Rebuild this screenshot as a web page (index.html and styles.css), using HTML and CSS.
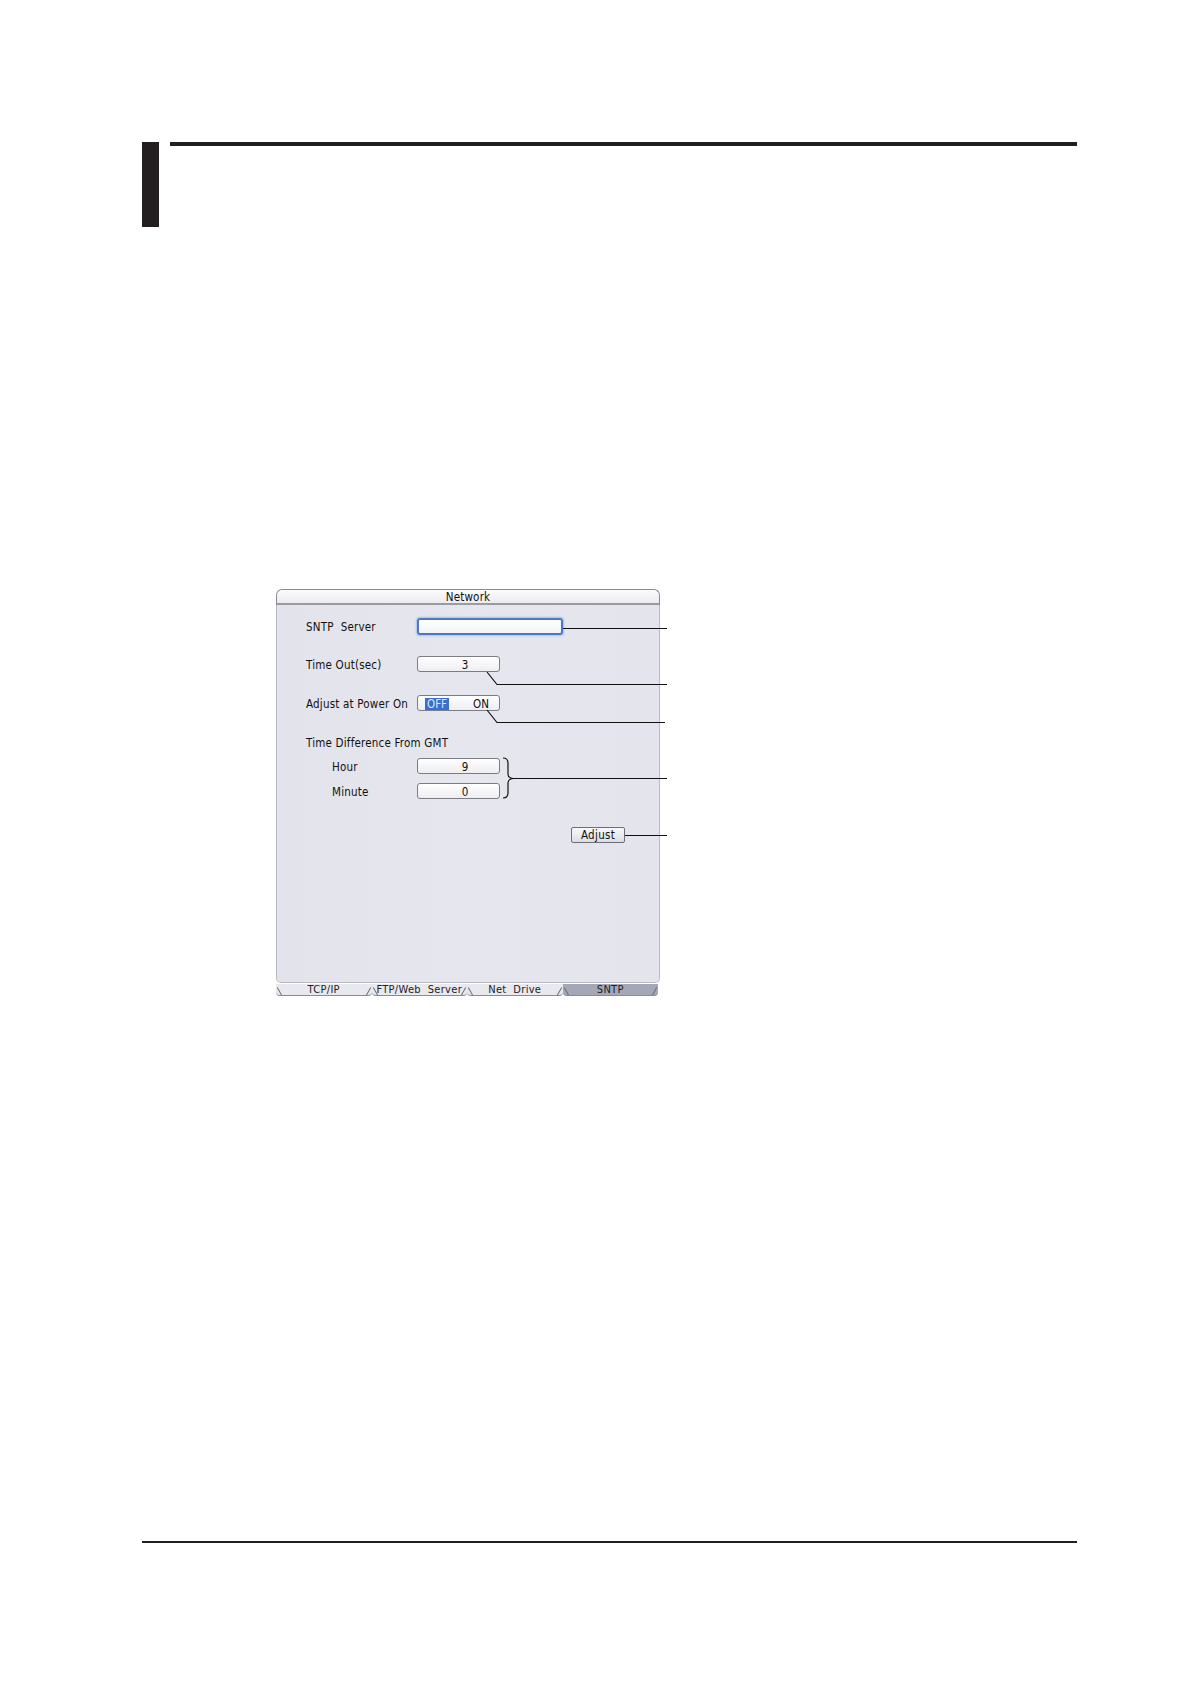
FILE: index.html
```html
<!DOCTYPE html>
<html lang="en">
<head>
<meta charset="utf-8">
<title>Network - SNTP</title>
<link rel="stylesheet" href="styles.css">
</head>
<body>
<div class="page">
  <header class="head">
    <div class="head-bar"></div>
    <div class="head-rule"></div>
  </header>

  <div class="figure">
    <div class="dialog">
      <div class="title">Network</div>
      <div class="body">
        <div class="row r1">
          <span class="lbl">SNTP  Server</span>
          <span class="field wide focus"></span>
        </div>
        <div class="row r2">
          <span class="lbl">Time Out(sec)</span>
          <span class="field num">3</span>
        </div>
        <div class="row r3">
          <span class="lbl">Adjust at Power On</span>
          <span class="field toggle"><span class="opt sel">OFF</span><span class="opt">ON</span></span>
        </div>
        <div class="row r4">
          <span class="lbl">Time Difference From GMT</span>
        </div>
        <div class="row r5">
          <span class="lbl sub">Hour</span>
          <span class="field num">9</span>
        </div>
        <div class="row r6">
          <span class="lbl sub">Minute</span>
          <span class="field num">0</span>
        </div>
        <div class="row r7">
          <span class="btn">Adjust</span>
        </div>
      </div>
      <div class="tabs">
        <div class="tab">TCP/IP</div>
        <div class="tab">FTP/Web  Server</div>
        <div class="tab">Net  Drive</div>
        <div class="tab active">SNTP</div>
      </div>
    </div>
    <svg class="leaders" width="400" height="407" viewBox="0 0 400 407">
      <g fill="none" stroke="#111" stroke-width="1.2">
        <path d="M287 39.5 H391"/>
        <path d="M211 83 L221 95.5 H391"/>
        <path d="M211 121 L221 133.5 H389"/>
        <path d="M227 169 Q232 169 232 174 V185 Q232 189 237 189.5 Q232 190 232 194 V204 Q232 209 227 209"/>
        <path d="M237 189.5 H391"/>
        <path d="M349 246.5 H391"/>
      </g>
    </svg>
  </div>

  <footer class="foot-rule"></footer>
</div>
</body>
</html>
```

FILE: styles.css
```css
html, body {
  margin: 0;
  padding: 0;
  background: #ffffff;
}

.page {
  width: 1191px;
  height: 1684px;
  box-sizing: border-box;
  padding: 142px 0 0 142px;
  overflow: hidden;
  font-family: "DejaVu Sans Condensed", "DejaVu Sans", sans-serif;
  font-stretch: condensed;
}

/* ---------- header ---------- */
.head {
  display: flex;
  align-items: flex-start;
  gap: 11px;
}

.head-bar {
  width: 17px;
  height: 85px;
  background: #231f20;
}

.head-rule {
  width: 907px;
  height: 4px;
  background: #231f20;
}

/* ---------- figure ---------- */
.figure {
  position: relative;
  margin: 362px 0 0 134px;
  width: 384px;
  height: 407px;
}

.dialog {
  width: 384px;
  height: 407px;
  box-sizing: border-box;
  display: flex;
  flex-direction: column;
  font-size: 11.5px;
  color: #111;
}

.title {
  height: 16px;
  box-sizing: border-box;
  border: 1px solid #8a8a90;
  border-bottom: 2px solid #9a9aa2;
  border-radius: 6px 6px 0 0;
  background: linear-gradient(#fbfbfc, #ececf0);
  text-align: center;
  line-height: 14px;
  letter-spacing: 0.2px;
}

.body {
  flex: 1;
  box-sizing: border-box;
  border: 1px solid #b9b9c2;
  border-top: none;
  border-radius: 0 0 5px 5px;
  background: linear-gradient(90deg, #e2e3eb 0%, #e6e7ee 50%, #e3e4ec 100%);
  padding: 13px 0 0 29px;
}

.row {
  display: flex;
  align-items: center;
  height: 16px;
}

.r1 { height: 17px; }
.r2 { margin-top: 21px; }
.r3 { margin-top: 23px; }
.r4 { margin-top: 23px; }
.r5 { margin-top: 8px; }
.r6 { margin-top: 9px; }
.r7 {
  margin-top: 28px;
  justify-content: flex-end;
  padding-right: 34px;
}

.lbl {
  width: 111px;
  white-space: pre;
  letter-spacing: 0.2px;
  padding-top: 1px;
}

.r4 .lbl { width: auto; }

.lbl.sub {
  width: 85px;
  padding-left: 26px;
}

.field {
  width: 83px;
  height: 16px;
  box-sizing: border-box;
  border: 1px solid #7c7c84;
  border-radius: 3px;
  background: linear-gradient(#ffffff, #eeeef2);
  display: flex;
  align-items: center;
  justify-content: center;
  line-height: 14px;
}

.field.num {
  padding-left: 13px;
  padding-top: 1px;
}

.field.wide {
  width: 146px;
  height: 17px;
}

.field.focus {
  border: 2px solid #4f78c4;
  box-shadow: 0 0 2px 1px #a8c0e8;
  background: linear-gradient(#ffffff, #f2f3f7);
}

.field.toggle {
  justify-content: space-between;
  padding: 1px 10px 0 7px;
}

.opt {
  line-height: 12px;
}

.opt.sel {
  background: #3a6fd0;
  color: #dfe8ff;
  padding: 0 2px;
}

.btn {
  width: 54px;
  height: 16px;
  box-sizing: border-box;
  border: 1px solid #6e6e76;
  border-radius: 2px;
  background: linear-gradient(#f8f8fa, #dcdde4);
  text-align: center;
  line-height: 15px;
  letter-spacing: 0.3px;
}

/* ---------- tabs ---------- */
.tabs {
  display: flex;
  height: 12px;
  margin-top: 1px;
  padding-right: 2px;
}

.tab {
  position: relative;
  flex: 1;
  box-sizing: border-box;
  height: 12px;
  overflow: hidden;
  white-space: pre;
  text-align: center;
  line-height: 12px;
  font-size: 11px;
  letter-spacing: 0.3px;
  border-bottom: 1px solid #8a8a90;
  border-radius: 0 0 4px 4px;
  background: #e8e8ee;
  color: #222;
}

.tab::before,
.tab::after {
  content: "";
  position: absolute;
  bottom: -1px;
  width: 1px;
  height: 9px;
  background: #6e6e76;
}

.tab::before {
  left: 3px;
  transform: rotate(-30deg);
}

.tab::after {
  right: 3px;
  transform: rotate(30deg);
}

.tab.active {
  background: #a4a7b6;
  border-bottom-color: #888a96;
}

.leaders {
  position: absolute;
  left: 0;
  top: 0;
  overflow: visible;
  pointer-events: none;
}

/* ---------- footer ---------- */
.foot-rule {
  margin-top: 545px;
  width: 935px;
  height: 2px;
  background: #231f20;
}
```
